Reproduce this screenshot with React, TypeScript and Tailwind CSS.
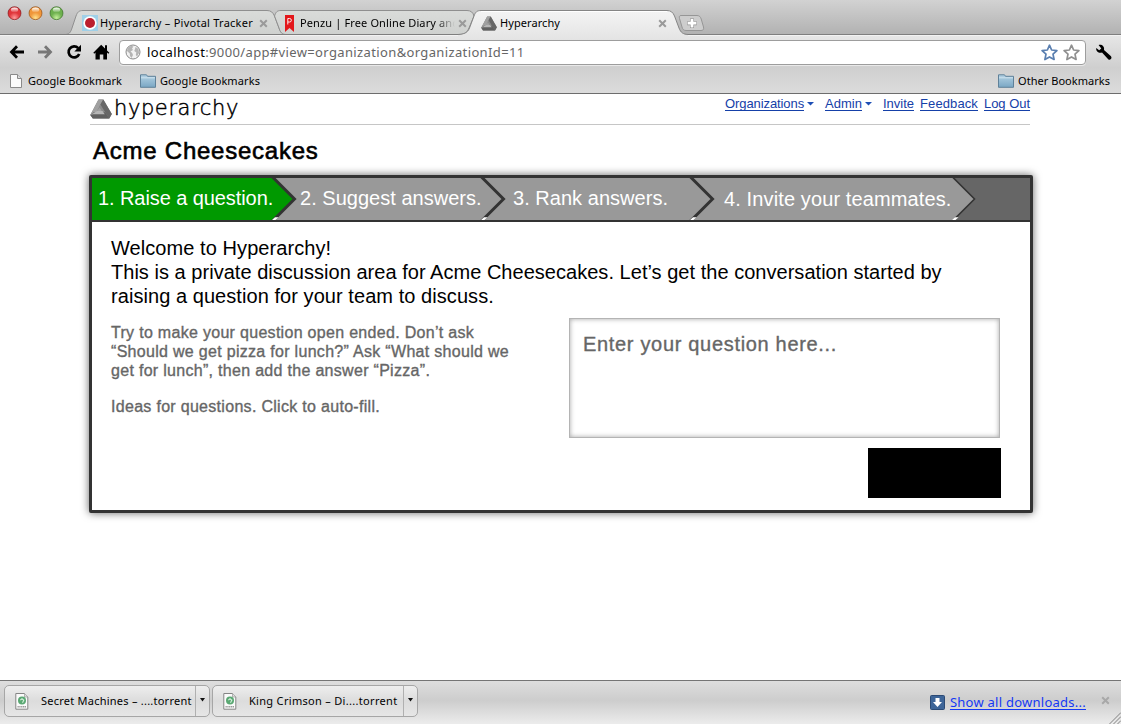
import type { ReactNode } from "react";

const UI = "font-['Noto_Sans',sans-serif]";

function TrafficLight({ hue }: { hue: "red" | "amber" | "green" }) {
  const colors = {
    red: ["#7d1a1c", "#e0353a", "#ff9a9a"],
    amber: ["#8a4a16", "#f0963a", "#ffe08a"],
    green: ["#3a6a2a", "#6db04e", "#c4ef9a"],
  }[hue];
  return (
    <svg width="15" height="15" viewBox="0 0 15 15">
      <defs>
        <radialGradient id={`body-${hue}`} cx="50%" cy="85%" r="75%">
          <stop offset="0" stopColor={colors[2]} />
          <stop offset="0.55" stopColor={colors[1]} />
          <stop offset="1" stopColor={colors[1]} />
        </radialGradient>
        <linearGradient id={`shine-${hue}`} x1="0" x2="0" y1="0" y2="1">
          <stop offset="0" stopColor="#fff" stopOpacity="0.95" />
          <stop offset="1" stopColor="#fff" stopOpacity="0.1" />
        </linearGradient>
      </defs>
      <circle cx="7.5" cy="7.7" r="6.9" fill="#fff" opacity="0.4" />
      <circle cx="7.5" cy="7.2" r="6.5" fill={`url(#body-${hue})`} stroke={colors[0]} strokeOpacity="0.7" />
      <ellipse cx="7.5" cy="3.9" rx="3.6" ry="2.3" fill={`url(#shine-${hue})`} />
    </svg>
  );
}

function TabShapes() {
  return (
    <svg className="absolute top-0 left-0" width="1121" height="36" viewBox="0 0 1121 36">
      <defs>
        <linearGradient id="tabIdle" x1="0" x2="0" y1="10" y2="34" gradientUnits="userSpaceOnUse">
          <stop offset="0" stopColor="#dadcda" />
          <stop offset="1" stopColor="#cfd1cf" />
        </linearGradient>
        <linearGradient id="tabActive" x1="0" x2="0" y1="10" y2="36" gradientUnits="userSpaceOnUse">
          <stop offset="0" stopColor="#f4f4f4" />
          <stop offset="1" stopColor="#e6e6e6" />
        </linearGradient>
      </defs>
      <path
        d="M66 34.5 C70 34 71 31 72 28 L76 16 C77.500 12 79 10.500 83 10.500 H267 C271 10.500 273 12.500 274.500 16 L279 28 C280.500 32 282 34 285 34.500 Z"
        fill="url(#tabIdle)"
        stroke="#8f8f8f"
      />
      <path
        d="M285 34.500 C281 34 280 31 279 28 L274.500 16 C276 12 277 10.500 281 10.500 H467 C471 10.500 473 12.500 474 16 L469 28 C467.500 32 465 34 462 34.500 Z"
        fill="url(#tabIdle)"
        stroke="#8f8f8f"
      />
      <path d="M0 34.500 H1121" stroke="#7e7e7e" />
      <path d="M0 35.500 H1121" stroke="#f2f2f2" />
      <path
        d="M458 36 V35 C464 34 467.500 33 469.500 28 L474 16 C475.500 12 477 10.500 481 10.500 H667 C671 10.500 673 12.500 674.500 16 L679 28 C681 33 683 34 688 35 V36 Z"
        fill="url(#tabActive)"
      />
      <path
        d="M458 34.500 C464 34 467.500 33 469.500 28 L474 16 C475.500 12 477 10.500 481 10.500 H667 C671 10.500 673 12.500 674.500 16 L679 28 C681 33 683 34 688 34.500"
        fill="none"
        stroke="#858585"
      />
      <path d="M481 11.500 H667" stroke="#fff" />
      <path
        d="M681 15.500 H697 C699.500 15.500 700.500 17 701.200 19 L703.500 27 C704 29.500 703 30.500 701 30.500 H686 C683.500 30.500 682.500 29 682 27 L679.500 18.500 C679 16.500 679.500 15.500 681 15.500 Z"
        fill="#cdcdcd"
        stroke="#969696"
      />
      <path d="M692 18.500 V28 M687.300 23.200 H696.700" stroke="#8e8e8e" strokeWidth="4" />
      <path d="M692 19 V27.500 M687.700 23.200 H696.300" stroke="#fff" strokeWidth="2.800" />
    </svg>
  );
}

function CloseX({ color = "#999" }: { color?: string }) {
  return (
    <svg width="9" height="9" viewBox="0 0 9 9">
      <path d="M1.200 1.200 L7.800 7.800 M7.800 1.200 L1.200 7.800" stroke={color} strokeWidth="2" />
    </svg>
  );
}

function PyramidLogo({ size }: { size: "sm" | "lg" }) {
  return (
    <svg className={size === "lg" ? "h-[20px] w-[22px]" : "h-[15px] w-[16px]"} viewBox="0 0 22 20">
      <path d="M8.500 0.500 H13.300 L21.800 15 L19.300 19.500 H2.800 L0.300 16 Z" fill="#7c7c7c" />
      <path d="M8.500 0.500 H13.300 L10.500 5.500 L7 12 H12 L10.800 9.500 L11 6 L4.500 16 H0.300 Z" fill="#a0a0a0" />
      <path d="M13.300 0.500 L21.800 15 L19.300 19.500 L10.300 5.600 Z" fill="#676767" />
      <path d="M10.300 5.600 L15.500 14.300 L12.500 12.500 L9 8 Z" fill="#8a8a8a" />
      <path d="M0.300 16 L3.800 13.200 H15 L19.300 19.500 H2.800 Z" fill="#606060" />
      <path d="M0.300 16 L7 12 H12.500 L14.800 15.300 H3 Z" fill="#b5b5b5" />
    </svg>
  );
}

function PenzuIcon() {
  return (
    <svg width="9" height="17" viewBox="0 0 9 17">
      <path d="M0 0 H9 V17 L4.500 13 L0 17 Z" fill="#e3171b" />
      <path d="M2.800 9.500 V3.500 H4.600 A1.700 1.700 0 0 1 4.600 7 H2.800" fill="none" stroke="#fff" strokeWidth="0.9" />
    </svg>
  );
}

function TitleBar() {
  return (
    <div className="relative h-[36px] bg-linear-to-b from-[#d2d2d2] to-[#b0b0b0]">
      <TabShapes />
      <div className="relative flex h-[36px] items-start">
        <div className="flex w-[82px] gap-[6px] pt-[6px] pl-[7px]">
          <TrafficLight hue="red" />
          <TrafficLight hue="amber" />
          <TrafficLight hue="green" />
        </div>
        <div className="mt-[11px] flex h-[24px] w-[203px] items-center">
          <svg width="16" height="16" viewBox="0 0 16 16">
            <rect width="16" height="16" fill="#9fd0e8" />
            <circle cx="8" cy="8" r="6.700" fill="#fff" />
            <circle cx="8" cy="8" r="5" fill="#bb1f2e" />
          </svg>
          <span className="ml-[2px] w-[159px] text-[11px] tracking-[0.25px] whitespace-nowrap">
            Hyperarchy – Pivotal Tracker
          </span>
          <CloseX color="#9a9a9a" />
        </div>
        <div className="mt-[11px] flex h-[24px] w-[196px] items-center">
          <PenzuIcon />
          <span className="ml-[6px] w-[158px] bg-linear-to-r from-black from-86% to-transparent to-98% bg-clip-text text-[11px] tracking-[0.13px] whitespace-nowrap text-transparent">
            Penzu | Free Online Diary and
          </span>
          <CloseX color="#9a9a9a" />
        </div>
        <div className="mt-[11px] flex h-[24px] items-center">
          <PyramidLogo size="sm" />
          <span className="ml-[3px] w-[158px] text-[11px] tracking-[0.08px]">Hyperarchy</span>
          <CloseX color="#9a9a9a" />
        </div>
      </div>
    </div>
  );
}

function Star({ stroke }: { stroke: string }) {
  return (
    <svg width="17" height="17" viewBox="0 0 17 17">
      <path
        d="M8.500 1.200 L10.600 6 L15.900 6.600 L12 10.200 L13.100 15.500 L8.500 12.900 L3.900 15.500 L5 10.200 L1.100 6.600 L6.400 6 Z"
        fill="#fff"
        stroke={stroke}
        strokeWidth="1.700"
        strokeLinejoin="round"
      />
    </svg>
  );
}

function Toolbar() {
  return (
    <div className="flex h-[32px] items-center bg-linear-to-b from-[#e6e6e6] to-[#cfcfcf]">
      <svg className="ml-[9px]" width="16" height="14" viewBox="0 0 16 14">
        <path d="M8 1.300 L2.500 7 L8 12.700 M3 7 H15" fill="none" stroke="#000" strokeWidth="2.800" />
      </svg>
      <svg className="ml-[12px]" width="16" height="14" viewBox="0 0 16 14">
        <path d="M8 1.300 L13.500 7 L8 12.700 M13 7 H1" fill="none" stroke="#777" strokeWidth="2.800" />
      </svg>
      <svg className="ml-[13px]" width="16" height="16" viewBox="0 0 16 16">
        <path d="M12.200 4.200 A5.500 5.500 0 1 0 13.200 10" fill="none" stroke="#000" strokeWidth="2.700" />
        <path d="M15 0.800 V7.500 H8.300 Z" fill="#000" />
      </svg>
      <svg className="ml-[11px]" width="17" height="16" viewBox="0 0 17 16">
        <path d="M8.200 0.800 L12 4.500 V1.200 H14 V6.500 L16.300 8.800 L15.300 9.800 L14 8.600 V15.500 H10.300 V10.500 H6.800 V15.500 H2.500 V8.600 L1.300 9.800 L0.300 8.800 Z" fill="#000" />
      </svg>
      <div className="ml-[9px] flex h-[25px] w-[967px] items-center rounded-[4px] border border-[#9d9d9d] bg-white pl-[5px] shadow-[0_1px_0_#e9e9e9]">
        <svg width="16" height="16" viewBox="0 0 16 16">
          <circle cx="8" cy="8" r="7" fill="#f2f2f2" stroke="#8b8b8b" />
          <path d="M2.500 4 L6 1.800 L8.500 2.500 L7 4.500 L8 6 L5.500 7.500 L7.200 9 L8 11 L6.500 14 L5 12 L4.800 9.500 L2 7 Z M10.500 3 L13.500 5 L14 9 L12 12.500 L10.800 11 L11.300 8.500 L9.300 7 L10 5 Z" fill="#b4b4b4" />
        </svg>
        <span className="ml-[6px] grow text-[13px] leading-[20px] tracking-[0.365px] text-[#666]">
          <span className="text-black">localhost</span>:9000/app#view=organization&organizationId=11
        </span>
        <div className="mr-[5px] flex gap-[5px] pt-px">
          <Star stroke="#5a7fb0" />
          <Star stroke="#909090" />
        </div>
      </div>
      <svg className="ml-[9px]" width="18" height="17" viewBox="0 0 18 17">
        <path
          d="M3.600 1 C6.500 0 9.800 2.200 9 5.900 L16 12.300 C17.500 14.500 15.300 16.700 13.200 15.200 L7 8.600 C4 9.600 0.700 7.500 1.200 4 L4.200 6.300 L6.300 4.500 Z"
          fill="#000"
        />
      </svg>
    </div>
  );
}

function FolderIcon() {
  return (
    <svg width="17" height="14" viewBox="0 0 17 14">
      <defs>
        <linearGradient id="folder" x1="0" x2="0" y1="0" y2="1">
          <stop offset="0" stopColor="#b4d2e4" />
          <stop offset="1" stopColor="#7aa7c4" />
        </linearGradient>
      </defs>
      <path d="M0.500 13.300 V0.800 H6.500 L7.500 2.300 H15.500 V13.300 Z" fill="url(#folder)" stroke="#5f8199" />
      <path d="M1 3.800 H15" stroke="#cfe3ef" />
    </svg>
  );
}

function BookmarksBar() {
  return (
    <div className="flex h-[26px] items-center border-b border-[#6d6d6d] bg-linear-to-b from-[#cfcfcf] to-[#dcdcdc] text-[11px] leading-[26px]">
      <svg className="ml-[10px]" width="12" height="14" viewBox="0 0 12 14">
        <path d="M0.500 0.500 H7.500 L11.500 4.500 V13.500 H0.500 Z" fill="#fbfbfb" stroke="#8a8a8a" />
        <path d="M7.500 0.500 V4.500 H11.500" fill="#ddd" stroke="#8a8a8a" />
      </svg>
      <span className="ml-[6px] w-[112px] tracking-[0.054px]">Google Bookmark</span>
      <FolderIcon />
      <span className="ml-[3px] grow tracking-[0.096px]">Google Bookmarks</span>
      <FolderIcon />
      <span className="mr-[11px] ml-[3px] tracking-[0.037px]">Other Bookmarks</span>
    </div>
  );
}

function NavLink({ children, menu }: { children: ReactNode; menu?: boolean }) {
  return (
    <a className="flex items-center">
      <span className="border-b border-[#1540a8] leading-[13px]">{children}</span>
      {menu && (
        <svg className="mr-[5px] ml-[3px]" width="7" height="4" viewBox="0 0 7 4">
          <path d="M0 0 H7 L3.500 3.500 Z" fill="#1d4fb5" />
        </svg>
      )}
    </a>
  );
}

function SiteHeader() {
  return (
    <header className="flex h-[31px] items-start justify-between border-b border-[#c6c6c6]">
      <div className="flex items-start pt-[5px]">
        <PyramidLogo size="lg" />
        <span className="ml-[2px] font-['DejaVu_Sans',sans-serif] text-[21px] leading-[18px] font-extralight tracking-[0.6px] [-webkit-text-stroke:0.45px_#000]">
          hyperarchy
        </span>
      </div>
      <nav className="flex gap-[6px] pt-[3px] text-[13px] text-[#1540a8]">
        <NavLink menu>
          <span className="tracking-[-0.09px]">Organizations</span>
        </NavLink>
        <NavLink menu>Admin</NavLink>
        <NavLink>Invite</NavLink>
        <NavLink>
          <span className="tracking-[0.11px]">Feedback</span>
        </NavLink>
        <NavLink>
          <span className="tracking-[-0.036px]">Log Out</span>
        </NavLink>
      </nav>
    </header>
  );
}

const arrows = [
  { x: 273.5, w: 3 },
  { x: 482.5, w: 3 },
  { x: 691.5, w: 3 },
  { x: 953.5, w: 1.6 },
];

function Steps() {
  return (
    <div className="relative h-[44px] border-b-2 border-[#333] bg-[#999] text-[20px] text-white">
      <svg className="absolute top-0 left-0" width="938" height="42" viewBox="92 178 938 42">
        <path d="M92 178 H273.500 L294.500 199 L273.500 220 H92 Z" fill="#009900" />
        <path d="M953.500 178 H1030 V220 H953.500 L974.500 199 Z" fill="#666" />
        {arrows.map((a) => (
          <g key={a.x}>
            <path
              d={`M${a.x - 1} 177 L${a.x + 21} 199 L${a.x - 1} 221`}
              fill="none"
              stroke="#333"
              strokeWidth={a.w}
            />
            <path d={`M${a.x - 1.5} 220 L${a.x + 1.5} 217.200 H${a.x + 5} L${a.x + 2} 220 Z`} fill="#fff" />
          </g>
        ))}
      </svg>
      <div className="relative flex leading-[40px] whitespace-nowrap">
        <span className="w-[208px] pl-[6px] tracking-[-0.08px]">1. Raise a question.</span>
        <span className="w-[213px] tracking-[0.02px]">2. Suggest answers.</span>
        <span className="w-[211px] tracking-[0.03px]">3. Rank answers.</span>
        <span className="pt-px tracking-[0.12px]">4. Invite your teammates.</span>
      </div>
    </div>
  );
}

function Panel() {
  return (
    <section className="-ml-px h-[338px] w-[944px] rounded-[2px] border-3 border-[#333] bg-white shadow-[0_0_9px_rgba(0,0,0,0.6)]">
      <Steps />
      <div className="px-[19px] pt-[14px]">
        <div className="text-[20px] leading-[24px] whitespace-nowrap">
          <p className="tracking-[0.07px]">Welcome to Hyperarchy!</p>
          <p className="tracking-[0.03px]">
            This is a private discussion area for Acme Cheesecakes. Let’s get the conversation started by
          </p>
          <p className="tracking-[0.06px]">raising a question for your team to discuss.</p>
        </div>
        <div className="mt-[10px] flex justify-between">
          <div className="pt-[5px] text-[16px] leading-[19px] tracking-[0.3px] whitespace-nowrap text-[#666] [-webkit-text-stroke:0.35px_#666]">
            <p>Try to make your question open ended. Don’t ask</p>
            <p>“Should we get pizza for lunch?” Ask “What should we</p>
            <p>get for lunch”, then add the answer “Pizza”.</p>
            <p className="mt-[17px]">Ideas for questions. Click to auto-fill.</p>
          </div>
          <div className="mr-[10px] flex w-[432px] flex-col items-end">
            <div className="mr-px h-[120px] w-[431px] border border-[#b4b4b4] px-[13px] pt-[13px] text-[20px] leading-[24px] tracking-[0.68px] text-[#666] shadow-[inset_0_0_5px_rgba(0,0,0,0.35)] [-webkit-text-stroke:0.35px_#666]">
              Enter your question here...
            </div>
            <div className="mt-[10px] h-[50px] w-[133px] bg-black" />
          </div>
        </div>
      </div>
    </section>
  );
}

function DownloadItem({ name, tracking }: { name: string; tracking: string }) {
  return (
    <div className="flex h-[32px] w-[206px] rounded-[5px] border border-[#a6a6a6] bg-linear-to-b from-[#eee] via-[#dcdcdc] to-[#e6e6e6]">
      <div className="flex w-[191px] items-center border-r border-[#b0b0b0] pl-[10px] text-[11px] whitespace-nowrap">
        <svg width="14" height="17" viewBox="0 0 14 17">
          <path d="M0.800 0.500 H9.500 L12.800 4 V16.200 H0.800 Z" fill="#fafafa" stroke="#858585" />
          <path d="M9.500 0.500 V4 H12.800" fill="#ddd" stroke="#999" strokeWidth="0.7" />
          <circle cx="7" cy="7.500" r="4" fill="#5aa873" />
          <path d="M5.300 7.200 L7 5.800 L8.800 7.200 L7.500 9.800" fill="none" stroke="#d5f0dc" strokeWidth="1.100" />
          <path d="M2.500 13.700 H11.300" stroke="#999" strokeWidth="1.600" strokeDasharray="1.300 0.500" />
        </svg>
        <span className={`ml-[12px] ${tracking}`}>{name}</span>
      </div>
      <svg className="mt-[12px] ml-[4px]" width="5" height="4" viewBox="0 0 5 4">
        <path d="M0 0 H5 L2.500 3.500 Z" fill="#111" />
      </svg>
    </div>
  );
}

function DownloadShelf() {
  return (
    <footer className="flex h-[44px] items-start gap-[2px] border-t border-[#757575] bg-linear-to-b from-[#dedede] via-[#cdcdcd] via-45% to-[#ececec] pt-[4px] pl-[4px]">
      <DownloadItem name="Secret Machines – ....torrent" tracking="tracking-[0.24px]" />
      <DownloadItem name="King Crimson – Di....torrent" tracking="tracking-[0.31px]" />
      <div className="flex grow items-center justify-end pt-[8px]">
        <svg width="15" height="15" viewBox="0 0 15 15">
          <rect x="0.500" y="0.500" width="14" height="14" rx="1" fill="#3d6598" stroke="#2b4a75" />
          <path d="M5.500 3 H9.500 V7 H12 L7.500 12 L3 7 H5.500 Z" fill="#fff" />
        </svg>
        <span className="ml-[5px] text-[13px] leading-[18px] tracking-[0.25px] text-[#1438f5] underline underline-offset-[2px]">
          Show all downloads...
        </span>
        <span className="-mt-[3px] mr-[11px] ml-[15px] flex">
          <CloseX color="#a8a8a8" />
        </span>
      </div>
      <svg className="absolute right-0 bottom-0" width="12" height="12" viewBox="0 0 12 12">
        <path d="M0.500 12 L12 0.500 M4.500 12 L12 4.500 M8.500 12 L12 8.500" stroke="#808080" />
      </svg>
    </footer>
  );
}

export default function App() {
  return (
    <div className={`relative flex h-[724px] w-[1121px] flex-col overflow-hidden bg-white text-black ${UI}`}>
      <TitleBar />
      <Toolbar />
      <BookmarksBar />
      <main className="ml-[90px] w-[940px] grow font-['Liberation_Sans',sans-serif]">
        <SiteHeader />
        <h1 className="h-[50px] pt-[12px] pl-[3px] text-[24px] leading-[28px] tracking-[0.76px] [-webkit-text-stroke:0.6px_#000]">
          Acme Cheesecakes
        </h1>
        <Panel />
      </main>
      <DownloadShelf />
    </div>
  );
}
